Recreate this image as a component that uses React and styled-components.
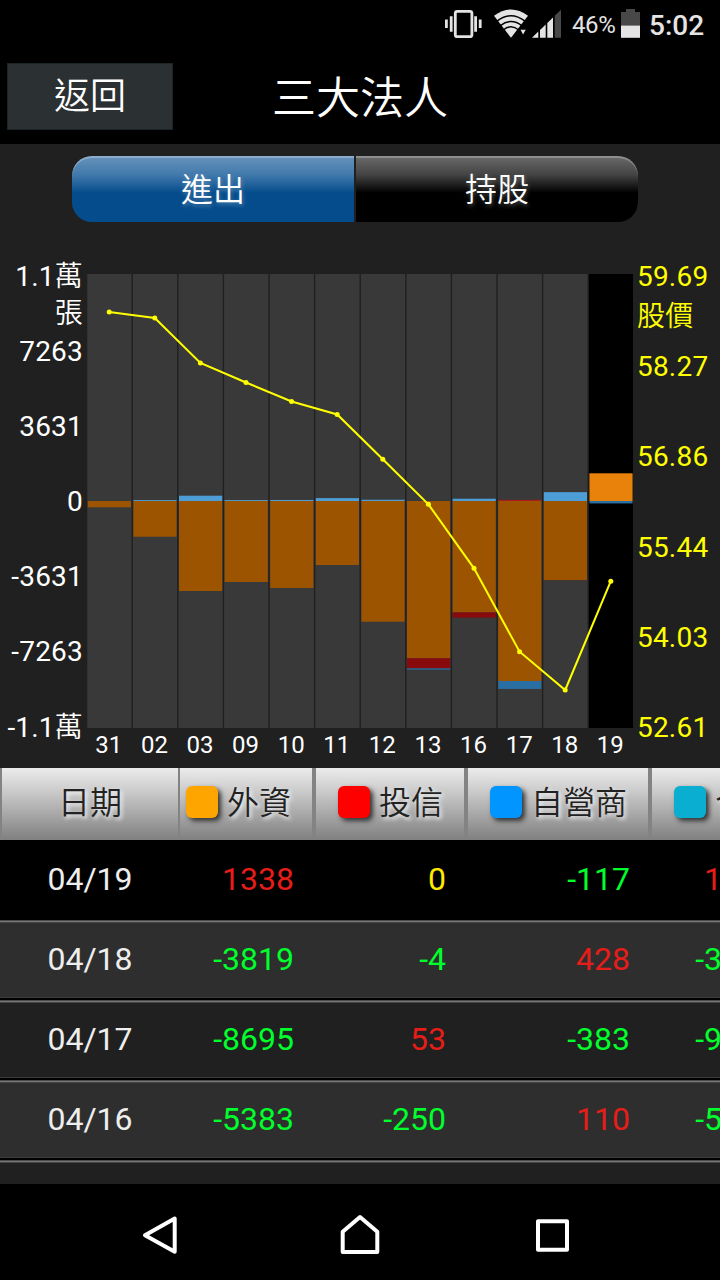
import React from 'react';
import styled, { createGlobalStyle } from 'styled-components';

const GlobalStyle = createGlobalStyle`
    body {
        margin: 0;
        background: #202020;
        font-family: Roboto, 'Noto Sans CJK TC', sans-serif;
        overflow: hidden;
    }
`;

const Page = styled.div`
    width: 720px;
    height: 1280px;
    display: flex;
    flex-direction: column;
    background: #202020;
    overflow: hidden;
`;

const StatusBar = styled.div`
    height: 48px;
    padding-right: 16px;
    display: flex;
    justify-content: flex-end;
    background: #000;
    color: #e4e4e4;
`;

const StatusIcon = styled.svg`
    display: block;
    height: 48px;
    margin-right: ${props => props.$gap}px;
`;

const Percent = styled.span`
    width: 49px;
    font-size: 24px;
    line-height: 51px;
    letter-spacing: -0.4px;
`;

const Clock = styled.span`
    width: 55px;
    font-size: 28px;
    font-weight: 500;
    line-height: 51px;
`;

const Header = styled.header`
    height: 96px;
    display: grid;
    grid-template-columns: 180px 1fr 180px;
    background: #000;
    color: #fff;
`;

const BackButton = styled.button`
    box-sizing: border-box;
    width: 166px;
    height: 67px;
    margin: 15px 0 0 7px;
    padding: 2px 0 0;
    border: 1px solid #1d2427;
    background: #2b3033;
    color: #fff;
    font-family: inherit;
    font-size: 36px;
    font-weight: 350;
    line-height: 63px;
`;

const Title = styled.h1`
    margin: 0;
    font-size: 44px;
    font-weight: 350;
    line-height: 102px;
    text-align: center;
`;

const Tabs = styled.div`
    display: flex;
    gap: 2px;
    padding: 12px 0 0 72px;
    height: 130px;
    box-sizing: border-box;
`;

const Tab = styled.div`
    box-sizing: border-box;
    width: 282px;
    height: 66px;
    border-radius: ${props => (props.$right ? '0 20px 20px 0' : '20px 0 0 20px')};
    background: ${props => (props.$active
        ? 'linear-gradient(#6893bb, #427aac 28%, #054c8c 56%, #054c8c)'
        : 'linear-gradient(#6b6b6b, #444 28%, #000 56%, #000)')};
    box-shadow: inset 0 2px 0 rgba(255, 255, 255, 0.25);
    color: #fff;
    font-size: 32px;
    font-weight: 350;
    line-height: 68px;
    text-align: center;
    text-shadow: 1px 2px 4px rgba(255, 255, 255, 0.3);
`;

const ChartArea = styled.section`
    height: 494px;
    display: grid;
    grid-template-columns: 87px 546px 87px;
`;

const Axis = styled.div`
    box-sizing: border-box;
    padding: ${props => (props.$right ? '0 0 0 4px' : '0 4px 0 0')};
    color: ${props => (props.$right ? '#ff0' : '#fff')};
    text-align: ${props => (props.$right ? 'left' : 'right')};
    font-size: 28px;
    letter-spacing: 0.2px;
    line-height: ${props => (props.$right ? 40 : 37)}px;
    margin-top: ${props => (props.$right ? -17 : -16)}px;
`;

const AxisLabel = styled.div`
    height: ${props => props.$step}px;
    white-space: pre;
`;

const Cjk = styled.span`
    display: ${props => (props.$block ? 'block' : 'inline')};
    font-weight: 350;
`;

const Plot = styled.div`
    display: flex;
    flex-direction: column;
`;

const PlotSvg = styled.svg`
    display: block;
    width: 546px;
    height: 454px;
`;

const Days = styled.div`
    display: grid;
    grid-template-columns: repeat(12, 45.6px);
    margin-left: -1px;
    color: #fff;
    font-size: 24px;
    line-height: 35px;
    text-align: center;
`;

const Table = styled.div`
    width: 796px;
    height: 416px;
    overflow: hidden;
`;

const columns = '180px 134px 152px 184px 146px';

const TableHead = styled.div`
    display: grid;
    grid-template-columns: ${columns};
    height: 72px;
    background: linear-gradient(#ececec, #c8c8c8 35%, #808080);
`;

const HeadCell = styled.div`
    display: flex;
    align-items: flex-start;
    justify-content: ${props => (props.$center ? 'center' : 'flex-start')};
    gap: 9px;
    border: solid #838383;
    border-width: 0 2px 0 ${props => (props.$flush ? 0 : 2)}px;
    padding-left: ${props => props.$pad || 0}px;
    color: #222;
    font-size: 32px;
    font-weight: 350;
    line-height: 70px;
    white-space: nowrap;
    text-shadow: 2px 2px 4px #fff;
`;

const Swatch = styled.i`
    flex: none;
    width: 32px;
    height: 32px;
    margin-top: 18px;
    border-radius: 6px;
    background: ${props => props.$color};
    box-shadow: 3px 3px 5px #333;
`;

const Row = styled.div`
    box-sizing: border-box;
    display: grid;
    grid-template-columns: ${columns};
    height: 80px;
    background: ${props => props.$bg};
    box-shadow: ${props => (props.$first
        ? 'none'
        : 'inset 0 1px #4c4c4c, inset 0 2px #777, inset 0 3px #444, inset 0 -2px #000, inset 0 -3px #3c3c3c')};
    font-size: 32px;
    line-height: 78px;
`;

const DateCell = styled.div`
    color: #eee;
    text-align: center;
`;

const tone = value => {
    if (value > 0) return '#e61d19';
    return value < 0 ? '#00ff2b' : '#ffea00';
};

const NumberCell = styled.div`
    padding-right: 20px;
    color: ${props => tone(props.$value)};
    text-align: right;
`;

const NavBar = styled.nav`
    height: 96px;
    background: #000;
    display: flex;
    justify-content: center;
    gap: 144px;
`;

const NavIcon = styled.svg`
    display: block;
    width: 48px;
    height: 96px;
    overflow: visible;
    fill: none;
    stroke: #fff;
    stroke-width: 4;
    stroke-linejoin: round;
`;

// day, foreign, trust, dealer, y of the price point
const days = [
    ['31', -304, 0, 0, 38],
    ['02', -1724, 0, 45, 44],
    ['03', -4347, 0, 256, 89],
    ['09', -3912, 0, 45, 108.5],
    ['10', -4200, 0, 50, 127.5],
    ['11', -3091, 0, 140, 140.5],
    ['12', -5830, 0, 60, 185.3],
    ['13', -7600, -483, -60, 230.3],
    ['16', -5383, -250, 110, 294.3],
    ['17', -8695, 53, -383, 377.7],
    ['18', -3819, -4, 428, 416],
    ['19', 1338, 0, -117, 307.2],
];

const rows = [
    ['04/19', 1338, 0, -117, 1221],
    ['04/18', -3819, -4, 428, -3395],
    ['04/17', -8695, 53, -383, -9025],
    ['04/16', -5383, -250, 110, -5523],
];

const positive = ['#e8820a', '#b01a1a', '#4d9dd6'];
const negative = ['#9c5400', '#880a0c', '#2a6fa3'];

const PITCH = 45.6;
const ZERO = 227;
const UNITS_PER_PX = 48.3;

const stackBars = values => {
    let up = ZERO;
    let down = ZERO;
    return values.map((value, i) => {
        const height = Math.abs(value) / UNITS_PER_PX;
        if (value > 0) {
            up -= height;
            return { y: up, height, fill: positive[i] };
        }
        down += height;
        return { y: down - height, height, fill: negative[i] };
    });
};

const Chart = () => (
    <PlotSvg viewBox='0 0 546 454'>
        {days.map(([day, ...values], i) => (
            <g key={day}>
                <rect
                    x={i * PITCH + 0.3}
                    y='0'
                    width='44.2'
                    height='454'
                    fill={i === 11 ? '#000' : '#393939'}
                />
                {stackBars(values.slice(0, 3)).map((bar, n) => (
                    <rect key={n} x={i * PITCH + 0.8} width='43.2' {...bar} />
                ))}
            </g>
        ))}
        <polyline
            points={days.map((d, i) => `${i * PITCH + 22.2},${d[4]}`).join(' ')}
            fill='none'
            stroke='#ff0'
            strokeWidth='2'
        />
        {days.map((d, i) => (
            <circle key={d[0]} cx={i * PITCH + 22.2} cy={d[4]} r='2.5' fill='#ff0' />
        ))}
    </PlotSvg>
);

const Status = () => (
    <StatusBar>
        <StatusIcon $gap={12} width='37' viewBox='445 0 37 48'>
            <rect x='455.3' y='11.3' width='16.6' height='25.4' rx='2' fill='none' stroke='#e4e4e4' strokeWidth='2.8' />
            <path d='M445 19.5h2.8v8.5h-2.8zM449.8 16.3h2.8v15.4h-2.8zM474.2 16.3h2.8v15.4h-2.8zM478.8 19.5h2.8v8.5h-2.8z' fill='#e4e4e4' />
        </StatusIcon>
        <StatusIcon $gap={4} width='34' viewBox='494 0 34 48'>
            <path d='M494 15.8Q511 3 528 15.8L511 37.8z' fill='#e4e4e4' />
            <g fill='none' stroke='#000' strokeWidth='1.5'>
                <path d='M497 21.2Q511 10.4 525 21.2' />
                <path d='M500 25.8Q511 17.2 522 25.8' />
                <path d='M503.2 30Q511 23.4 518.8 30' />
            </g>
            <path d='M519.4 28.6h8v7h-8z' fill='#000' />
            <path d='M520.5 29.7h5.2l-2.6 4.8z' fill='#e4e4e4' />
        </StatusIcon>
        <StatusIcon $gap={11} width='29' viewBox='532 0 29 48'>
            <path d='M532 37.7L538.3 31.6V37.7zM540 37.7V30L545.7 24.5V37.7zM547.3 37.7V23L553 17.5V37.7z' fill='#e4e4e4' />
            <path d='M554.7 37.7V15.8L561 9.8V37.7z' fill='#484848' />
        </StatusIcon>
        <Percent>46%</Percent>
        <StatusIcon $gap={9} width='19' viewBox='621 0 19 48'>
            <path d='M621 25.5V12h5V9h9v3h5v13.5z' fill='#484848' />
            <path d='M621 25.5h19v12.3h-19z' fill='#e4e4e4' />
        </StatusIcon>
        <Clock>5:02</Clock>
    </StatusBar>
);

const App = () => (
    <Page>
        <GlobalStyle />
        <Status />
        <Header>
            <BackButton>返回</BackButton>
            <Title>三大法人</Title>
        </Header>
        <Tabs>
            <Tab $active>進出</Tab>
            <Tab $right>持股</Tab>
        </Tabs>
        <ChartArea>
            <Axis>
                <AxisLabel $step={75.1}>1.1<Cjk>萬</Cjk><Cjk $block>張</Cjk></AxisLabel>
                {['7263', '3631', '0', '-3631', '-7263'].map(label => (
                    <AxisLabel key={label} $step={75.1}>{label}</AxisLabel>
                ))}
                <AxisLabel $step={75.1}>-1.1<Cjk>萬</Cjk></AxisLabel>
            </Axis>
            <Plot>
                <Chart />
                <Days>
                    {days.map(([day]) => <span key={day}>{day}</span>)}
                </Days>
            </Plot>
            <Axis $right>
                <AxisLabel $step={90.2}>59.69<Cjk $block>股價</Cjk></AxisLabel>
                {['58.27', '56.86', '55.44', '54.03', '52.61'].map(label => (
                    <AxisLabel key={label} $step={90.2}>{label}</AxisLabel>
                ))}
            </Axis>
        </ChartArea>
        <Table>
            <TableHead>
                <HeadCell $center>日期</HeadCell>
                <HeadCell $flush $pad={6}><Swatch $color='#ffa500' />外資</HeadCell>
                <HeadCell $pad={22}><Swatch $color='#f00' />投信</HeadCell>
                <HeadCell $pad={22}><Swatch $color='#0095ff' />自營商</HeadCell>
                <HeadCell $pad={22}><Swatch $color='#09aed0' />合計</HeadCell>
            </TableHead>
            {rows.map(([date, ...values], i) => (
                <Row key={date} $first={i === 0} $bg={['#000', '#2e2e2e', '#202020', '#2e2e2e'][i]}>
                    <DateCell>{date}</DateCell>
                    {values.map((value, n) => (
                        <NumberCell key={n} $value={value}>{value}</NumberCell>
                    ))}
                </Row>
            ))}
            <Row $bg='#202020' />
        </Table>
        <NavBar>
            <NavIcon viewBox='144 1184 48 96'>
                <path d='M145 1235.3L174.7 1218.5V1251.8z' />
            </NavIcon>
            <NavIcon viewBox='336 1184 48 96'>
                <path d='M360 1217L377.3 1231.7V1252H342.7V1231.7z' />
            </NavIcon>
            <NavIcon viewBox='528 1184 48 96'>
                <path d='M538 1221.3H567V1249.7H538z' />
            </NavIcon>
        </NavBar>
    </Page>
);

export default App;
